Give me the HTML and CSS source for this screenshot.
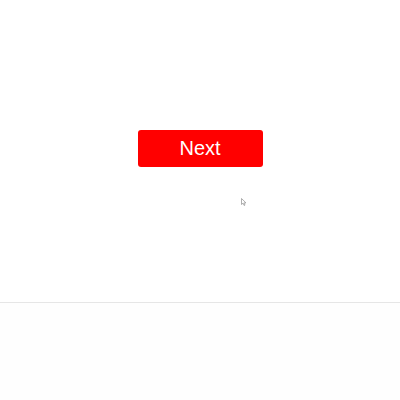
FILE: index.html
```html
<!DOCTYPE html>
<html>
<head>
<meta charset="utf-8">
<link rel="stylesheet" href="styles.css">
</head>
<body>
<div class="stage">
  <button class="next">Next</button>
  <svg class="cursor" width="6" height="8" viewBox="0 0 6 8"><path d="M0.5 0.5 L0.5 6.5 L2 5.2 L3.2 7.5 L4 7.1 L2.9 4.9 L5 4.9 Z" fill="#fff" stroke="#9a9a9a" stroke-width="0.8"/></svg>
</div>
<div class="footer"></div>
</body>
</html>
```
FILE: styles.css
```css
html, body { margin: 0; padding: 0; background: #ffffff; }
body { width: 400px; height: 400px; overflow: hidden; font-family: "Liberation Sans", Arial, sans-serif; }
.stage { position: relative; height: 302px; display: flex; flex-direction: column; align-items: center; padding-top: 130px; box-sizing: border-box; }
.next { width: 125px; height: 37px; background: #ff0000; color: #ffffff; border: none; border-radius: 3px; font-family: "Liberation Sans", Arial, sans-serif; font-size: 20px; padding: 0; margin-left: 0; cursor: pointer; }
.cursor { position: absolute; left: 241px; top: 198px; }
.footer { height: 98px; border-top: 1px solid #e6e6e6; background: #fefefe; }
```
